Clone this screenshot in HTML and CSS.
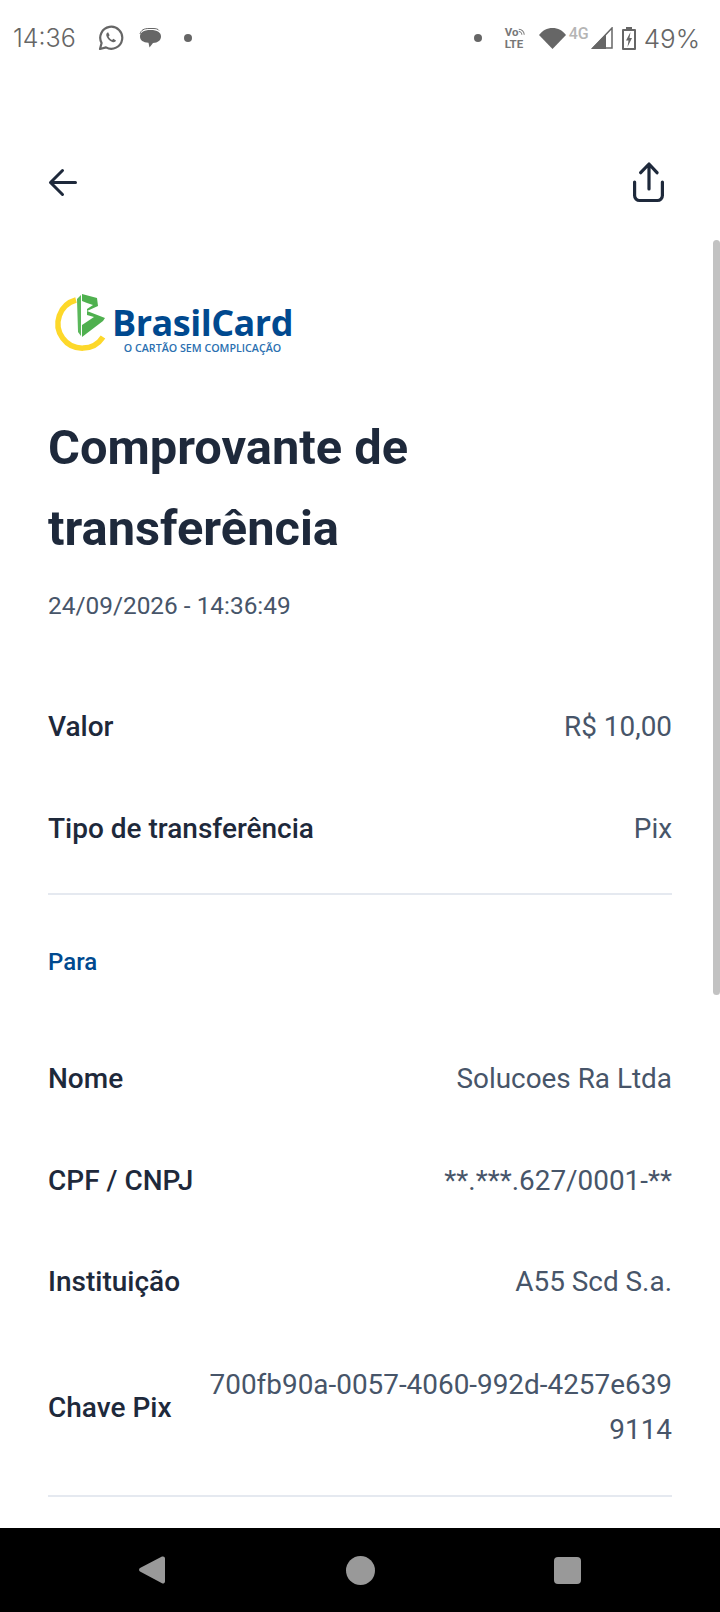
FILE: index.html
```html
<!DOCTYPE html>
<html lang="pt-BR">
<head>
  <meta charset="UTF-8">
  <meta name="viewport" content="width=device-width, initial-scale=1.0">
  <title>Comprovante de transferência</title>
  <link rel="stylesheet" href="styles.css">
</head>
<body>
  <div id="phone">
    <div class="status-bar">
      <div class="status-left">
        <span class="clock">14:36</span>
        <svg class="whatsapp" width="26" height="26" viewBox="0 0 26 26">
          <path d="M2 24l1.600-6A11 11 0 1 1 8 22.400z" fill="none" stroke="#666" stroke-width="2.200" stroke-linejoin="round"/>
          <path d="M9.600 7.400c-1.500.8-1.800 2.600-.6 4.800 1.300 2.400 3.200 4.100 5.400 4.800 1.700.5 3.100-.1 3.600-1.500l-2.700-1.700-1.200 1.100c-1.400-.6-2.700-1.900-3.500-3.500l1-1.200-1.500-2.900z" fill="#666"/>
        </svg>
        <svg class="chat" width="22" height="22" viewBox="0 0 22 22">
          <path d="M1 7C2 3 5 1.500 10 1.500h4c3 0 5 .5 6 2" fill="none" stroke="#666" stroke-width="1"/>
          <path d="M1 9.500C1 5.500 4.500 3 11.500 3S22 5.500 22 9.500c0 3.800-3 6.300-8 6.500l-3.500 4.500-1-4.700C4 15.300 1 13.300 1 9.500z" fill="#666"/>
        </svg>
        <span class="dot dot-left"></span>
      </div>
      <div class="status-right">
        <span class="dot"></span>
        <span class="volte"><span class="vo">Vo<svg width="7" height="8" viewBox="0 0 9 9"><path d="M1 1a7 7 0 0 1 7 7M1 4a4 4 0 0 1 4 4" fill="none" stroke="#777" stroke-width="1.300"/></svg></span><span>LTE</span></span>
        <svg class="wifi" width="27" height="21" viewBox="0 0 27 21"><path d="M0 7C3.500 2.500 8 0 13.500 0S23.500 2.500 27 7L13.500 21z" fill="#666"/></svg>
        <span class="net">4G</span>
        <svg class="signal" width="22" height="22" viewBox="0 0 22 22"><path d="M21 1v20H2z" fill="none" stroke="#666" stroke-width="1.500"/><path d="M15 7v15H0z" fill="#666"/></svg>
        <svg class="battery" width="14" height="23" viewBox="0 0 14 23">
          <path d="M4 0h6v2h3a1 1 0 0 1 1 1v19a1 1 0 0 1-1 1H1a1 1 0 0 1-1-1V3a1 1 0 0 1 1-1h3z" fill="#666"/>
          <rect x="2" y="4" width="10" height="17" fill="#fff"/>
          <path d="M8.500 5L4 13.500h2.500L5.500 20 10 11H7.500z" fill="#666"/>
        </svg>
        <span class="percent">49%</span>
      </div>
    </div>

    <div class="page">
      <div class="toolbar">
        <svg class="back" width="32" height="32" viewBox="0 0 32 32" fill="none" stroke="#1e293b" stroke-width="3" stroke-linecap="round" stroke-linejoin="round"><path d="M27.500 15.500H2.500M14.500 3.500L2.500 15.500l12 12"/></svg>
        <svg class="share" width="34" height="42" viewBox="0 0 34 42" fill="none" stroke="#1e293b" stroke-width="3.200" stroke-linecap="round" stroke-linejoin="round"><path d="M18 27V2M9.700 10.700L18 2l8 8.700M3.600 20v13.500a5 5 0 0 0 5 5h17.800a5 5 0 0 0 5-5V20"/></svg>
      </div>

      <div class="logo">
        <svg width="62" height="66" viewBox="50 288 62 66">
          <path d="M76 300A24.500 24.500 0 1 0 103 337" fill="none" stroke="#fdd82a" stroke-width="5.500"/>
          <path d="M77 299L81 295V336L78 332z" fill="#5bb85b"/>
          <path d="M82 294L97 298 98 306 87 311V309L93 305 87 303 82 301z" fill="#4fb04f"/>
          <path d="M87 311L105 318 103 321 82 337V325L94 317 87 315z" fill="#4fb04f"/>
        </svg>
        <div class="logo-text">
          <span class="brand">BrasilCard</span>
          <span class="slogan">O CARTÃO SEM COMPLICAÇÃO</span>
        </div>
      </div>

      <h1>Comprovante de transferência</h1>
      <p class="date">24/09/2026 - 14:36:49</p>

      <div class="section">
        <div class="row"><span class="label">Valor</span><span class="value">R$ 10,00</span></div>
        <div class="row"><span class="label">Tipo de transferência</span><span class="value">Pix</span></div>
      </div>

      <div class="section section-to">
        <div class="section-title">Para</div>
        <div class="row"><span class="label">Nome</span><span class="value">Solucoes Ra Ltda</span></div>
        <div class="row"><span class="label">CPF / CNPJ</span><span class="value">**.***.627/0001-**</span></div>
        <div class="row"><span class="label">Instituição</span><span class="value">A55 Scd S.a.</span></div>
        <div class="row row-tall"><span class="label">Chave Pix</span><span class="value value-key">700fb90a-0057-4060-992d-4257e6399114</span></div>
      </div>
    </div>

    <div class="scrollbar"></div>

    <div class="nav-bar">
      <svg width="28" height="30" viewBox="0 0 28 30"><path d="M25 1.500a2 2 0 0 1 2 2v23a2 2 0 0 1-3 1.700L2 16.500a2 2 0 0 1 0-3.400L24 1.500z" fill="#999"/></svg>
      <span class="nav-home"></span>
      <span class="nav-recent"></span>
    </div>
  </div>
</body>
</html>
```

FILE: styles.css
```css
html, body {
  margin: 0;
  padding: 0;
}
body {
  font-family: Roboto, Arial, sans-serif;
  background-color: #fff;
}
#phone {
  position: relative;
  width: 720px;
  height: 1612px;
  overflow: hidden;
  display: flex;
  flex-direction: column;
}
.status-bar {
  height: 76px;
  flex: none;
  display: flex;
  justify-content: space-between;
  align-items: center;
  padding: 0 20px 0 13px;
  color: #666;
}
.status-left, .status-right {
  display: flex;
  align-items: center;
}
.clock {
  font-family: Inter, sans-serif;
  font-weight: 300;
  font-size: 25px;
  width: 85px;
}
.chat {
  margin-left: 15px;
}
.dot {
  width: 8px;
  height: 8px;
  border-radius: 50%;
  background-color: #666;
}
.dot-left {
  margin-left: 23px;
}
.volte {
  margin-left: 23px;
  width: 21px;
  display: flex;
  flex-direction: column;
  font-weight: 700;
  font-size: 11.500px;
  line-height: 12px;
  color: #777;
}
.vo {
  white-space: nowrap;
}
.wifi {
  margin-left: 13px;
}
.net {
  margin: 0 0 9px 3px;
  font-size: 16px;
  line-height: 1;
  font-weight: 500;
  color: #b5b5b5;
}
.signal {
  margin-left: 2px;
}
.battery {
  margin-left: 9px;
}
.percent {
  font-family: Inter, sans-serif;
  font-weight: 300;
  font-size: 26px;
  margin-left: 8px;
}

.page {
  flex: 1;
  padding: 0 48px;
}
.toolbar {
  display: flex;
  justify-content: space-between;
  align-items: flex-start;
  padding: 86px 7px 0 0;
  height: 124px;
  margin-bottom: 2px;
}
.back {
  margin-top: 5px;
}
.logo {
  display: flex;
  align-items: flex-start;
  height: 66px;
  margin-left: 2px;
}
.logo-text {
  display: flex;
  flex-direction: column;
  align-items: center;
  margin-top: 17px;
}
.brand {
  font-family: "Open Sans", sans-serif;
  font-weight: 700;
  font-size: 36px;
  line-height: 36px;
  letter-spacing: -0.5px;
  color: #00498f;
}
.slogan {
  font-family: "Open Sans", sans-serif;
  font-weight: 600;
  font-size: 10.700px;
  line-height: 14px;
  color: #2a6fb0;
}
h1 {
  margin: 53px 0 0;
  width: 420px;
  font-size: 48.800px;
  font-weight: 700;
  line-height: 81px;
  color: #1e293b;
}
.date {
  margin: 21px 0 0;
  font-size: 24.400px;
  line-height: 32px;
  color: #475569;
}
.section {
  margin-top: 54px;
  padding-bottom: 14px;
  border-bottom: 2px solid #e5e9f0;
}
.section-to {
  margin-top: 0;
  padding-bottom: 13px;
}
.section-title {
  font-size: 24px;
  font-weight: 500;
  line-height: 32px;
  color: #00498f;
  padding: 51px 0 50px;
}
.row {
  display: flex;
  justify-content: space-between;
  align-items: center;
  min-height: 101.500px;
  gap: 30px;
}
.row-tall {
  min-height: 149px;
}
.label {
  flex: none;
  font-size: 28px;
  font-weight: 500;
  color: #1e293b;
}
.value {
  font-size: 27.900px;
  line-height: 45px;
  color: #475569;
  text-align: right;
}
.value-key {
  width: 470px;
  word-break: break-all;
}
.scrollbar {
  position: absolute;
  top: 240px;
  right: 0;
  width: 7px;
  height: 755px;
  border-radius: 4px;
  background-color: #c2c2c2;
}
.nav-bar {
  flex: none;
  height: 84px;
  background-color: #000;
  display: flex;
  align-items: center;
  justify-content: space-between;
  padding: 0 139px 0 138px;
}
.nav-home {
  width: 29px;
  height: 29px;
  border-radius: 50%;
  background-color: #999;
}
.nav-recent {
  width: 27px;
  height: 27px;
  border-radius: 4px;
  background-color: #999;
}
```
